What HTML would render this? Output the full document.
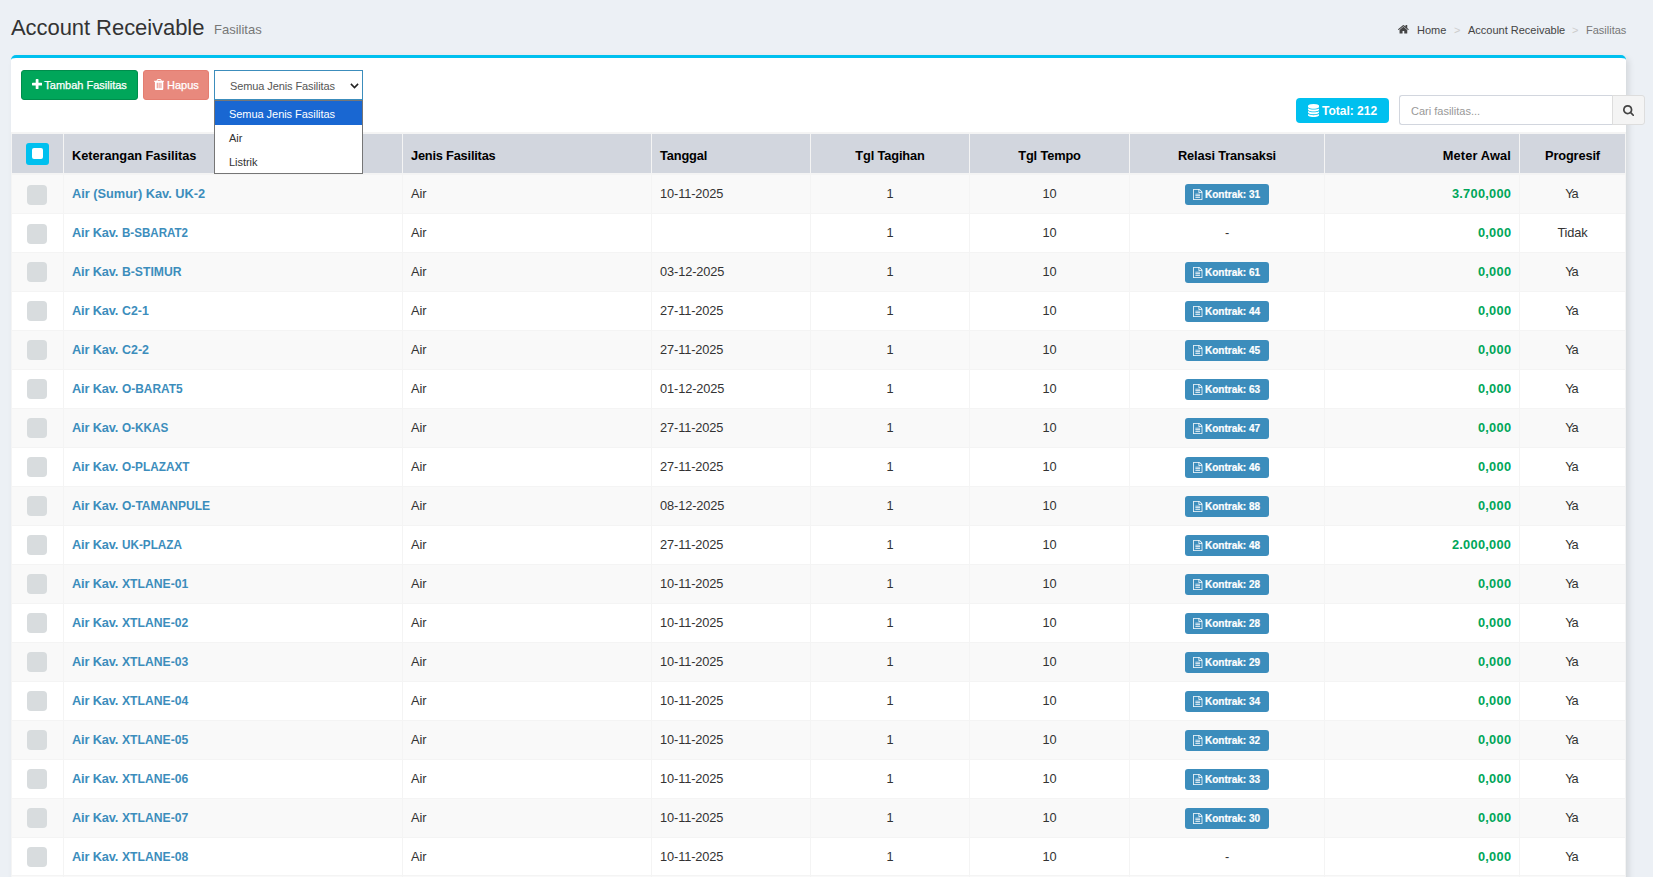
<!DOCTYPE html>
<html lang="id">
<head>
<meta charset="utf-8">
<title>Account Receivable - Fasilitas</title>
<style>
*{box-sizing:border-box}
html,body{margin:0;padding:0}
body{width:1653px;height:877px;overflow:hidden;background:#ecf0f5;font-family:"Liberation Sans",sans-serif;color:#333;position:relative;font-size:12.8px}
.abs{position:absolute;white-space:nowrap}
h1.title{position:absolute;left:11px;top:13px;letter-spacing:-0.06px;margin:0;font-weight:normal;font-size:22px;line-height:30px;color:#333;white-space:nowrap}
h1.title small{position:absolute;left:203px;top:2px;letter-spacing:0;font-size:13px;color:#777;font-weight:normal}
.bc{position:absolute;top:22px;font-size:11px;line-height:16px;color:#444;white-space:nowrap}
.bc.sep{color:#ccc}
.bc.act{color:#777}
.box{position:absolute;left:11px;top:55px;width:1615px;height:900px;background:#fff;border-top:3px solid #00c0ef;border-radius:5px;box-shadow:3px 3px 6px rgba(0,0,0,.1)}
.btn{position:absolute;top:70px;height:30px;border-radius:3px;border:1px solid;color:#fff;font-size:11px;line-height:28px;white-space:nowrap}
.btn-add{left:21px;width:117px;background:#00a65a;border-color:#008d4c}
.btn-del{left:143px;width:66px;background:#dd4b39;border-color:#d73925;opacity:.65}
.btn svg{position:absolute}
.btn span{position:absolute;top:0;-webkit-text-stroke:0.25px #fff}
.sel{position:absolute;left:214px;top:70px;width:149px;height:30px;border:1px solid #3c8dbc;background:#fff;color:#555;font-size:11px;line-height:28px}
.sel span{position:absolute;left:15px;top:1px;letter-spacing:-0.1px}
.sel svg{position:absolute;left:135px;top:12px}
.dd{position:absolute;left:214px;top:100px;width:149px;height:74px;border:1px solid #767676;background:#fff;font-size:11px;color:#333;z-index:5}
.dd div{height:24px;line-height:26px;letter-spacing:-0.05px;padding-left:14px;white-space:nowrap}
.dd div.on{background:#1967d2;color:#fff}
.badge{position:absolute;left:1296px;top:98px;width:93px;height:25px;border-radius:4px;background:#00c0ef;color:#fff;font-weight:bold;font-size:12px;line-height:25px;white-space:nowrap}
.badge svg{position:absolute}
.badge span{position:absolute;left:26px;top:1px}
.srch{position:absolute;left:1399px;top:95px;width:214px;height:30px;border:1px solid #d2d6de;border-right:0;border-radius:3px 0 0 3px;background:#fff;color:#999;font-size:11px;line-height:30px;padding-left:11px;white-space:nowrap}
.sbtn{position:absolute;left:1612px;top:95px;width:33px;height:30px;border:1px solid #ddd;border-radius:0 3px 3px 0;background:#f4f4f4}
.sbtn svg{position:absolute}
table.tbl{position:absolute;left:11px;top:132px;width:1615px;border-collapse:separate;border-spacing:0;table-layout:fixed;border-top:2px solid #f4f4f4;border-right:1px solid #f4f4f4;font-size:12.8px}
.tbl th,.tbl td{border-left:1px solid #f4f4f4;padding:0 8px;white-space:nowrap;overflow:hidden;text-align:left;vertical-align:top}
.tbl th{height:41px;padding-top:4px;line-height:35px;border-bottom:2px solid #f4f4f4;letter-spacing:-0.14px;background:#d2d6de;color:#000;font-weight:bold;font-size:12.8px}
.tbl td{height:39px;padding-top:1px;line-height:36px;letter-spacing:-0.12px;border-bottom:1px solid #f4f4f4;color:#333}
.tbl tr.odd td{background:#f9f9f9}
.tbl tr.even td{background:#fff}
.c1{width:52px}.c2{width:339px}.c3{width:249px}.c4{width:159px}.c5{width:159px}.c6{width:160px}.c7{width:195px}.c8{width:195px}.c9{width:106px}
.tbl .c1{padding:0;position:relative}
.tbl .c5,.tbl .c6,.tbl .c7,.tbl .c9{text-align:center}
.tbl .c8{text-align:right}
.tbl td.c2 a{color:#3c8dbc;font-weight:bold;text-decoration:none}
.tbl td.c8 b{color:#00a65a;letter-spacing:0.27px;margin-right:-0.27px}
.hchk{position:absolute;left:14px;top:9px;width:23px;height:22px;border-radius:3px;background:#00c0ef}
.hchk i{position:absolute;left:6px;top:5px;width:11px;height:11px;border-radius:2px;background:#fff}
.chk{position:absolute;left:15px;top:9px;width:20px;height:20px;border-radius:4px;background:#d8dcde}
.lbl{display:inline-block;position:relative;width:84px;height:21px;border-radius:3px;background:#3c8dbc;color:#fff;font-size:10px;line-height:21px;vertical-align:top;margin-top:8px;text-align:left;letter-spacing:0}
.lbl svg{position:absolute}
.lbl b{position:absolute;left:20px;top:0;-webkit-text-stroke:0.2px #fff}
.tbl td.c2 a span{display:inline-block;letter-spacing:0}
.tbl td.c2 a span.p{width:49.6px;letter-spacing:-0.16px;white-space:pre}
.tbl td.c2 a span.s{transform-origin:0 50%}
.tbl td.ya{letter-spacing:-1.3px;padding-right:10.5px}
.chk.lo{top:10px}
.tbl tbody tr:nth-child(18) td{height:38px}

</style>
</head>
<body>
<h1 class="title">Account Receivable<small>Fasilitas</small></h1>
<svg class="abs" style="left:1398.4px;top:25.15px" width="10.8" height="8.59" viewBox="89.9 253 1612.2 1283"><path fill="#444" d="M1472 992v480q0 26-19 45t-45 19h-384v-384h-256v384h-384q-26 0-45-19t-19-45v-480q0-1 .5-3t.5-3l575-474 575 474q1 2 1 6zm223-69l-62 74q-8 9-21 11h-3q-13 0-21-7l-692-577-692 577q-12 8-24 7-13-2-21-11l-62-74q-8-10-7-23.500t11-21.500l719-599q32-26 76-26t76 26l244 204v-195q0-14 9-23t23-9h192q14 0 23 9t9 23v408l219 182q10 8 11 21.500t-7 23.500z"/></svg>
<span class="bc" style="left:1417px">Home</span>
<span class="bc sep" style="left:1454px">&gt;</span>
<span class="bc" style="left:1468px">Account Receivable</span>
<span class="bc sep" style="left:1572px">&gt;</span>
<span class="bc act" style="left:1586px">Fasilitas</span>
<div class="box"></div>
<div class="btn btn-add"><svg style="left:9.6px;top:8.05px" width="10.21" height="10.21" viewBox="192 128 1408 1408"><path fill="#fff" d="M1600 736v192q0 40-28 68t-68 28h-416v416q0 40-28 68t-68 28h-192q-40 0-68-28t-28-68v-416h-416q-40 0-68-28t-28-68v-192q0-40 28-68t68-28h416v-416q0-40 28-68t68-28h192q40 0 68 28t28 68v416h416q40 0 68 28t28 68z"/></svg><span style="left:22.3px">Tambah Fasilitas</span></div>
<div class="btn btn-del"><svg style="left:9.8px;top:7.8px" width="10.21" height="11.14" viewBox="192 128 1408 1536"><path fill="#fff" d="M704 1376v-704q0-14-9-23t-23-9h-64q-14 0-23 9t-9 23v704q0 14 9 23t23 9h64q14 0 23-9t9-23zm256 0v-704q0-14-9-23t-23-9h-64q-14 0-23 9t-9 23v704q0 14 9 23t23 9h64q14 0 23-9t9-23zm256 0v-704q0-14-9-23t-23-9h-64q-14 0-23 9t-9 23v704q0 14 9 23t23 9h64q14 0 23-9t9-23zm-544-992h448l-48-117q-7-9-17-11h-317q-10 2-17 11zm928 32v64q0 14-9 23t-23 9h-96v948q0 83-47 143.500t-113 60.500h-832q-66 0-113-58.500t-47-141.500v-952h-96q-14 0-23-9t-9-23v-64q0-14 9-23t23-9h309l70-167q15-37 54-63t79-26h320q40 0 79 26t54 63l70 167h309q14 0 23 9t9 23z"/></svg><span style="left:23px">Hapus</span></div>
<div class="sel"><span>Semua Jenis Fasilitas</span><svg width="9" height="6.5" viewBox="0 0 10 7" preserveAspectRatio="none"><path d="M1 1L5 5L9 1" fill="none" stroke="#222" stroke-width="1.7"/></svg></div>
<div class="badge"><svg style="left:12.3px;top:5.6px" width="11.14" height="13.0" viewBox="128 0 1536 1792"><path fill="#fff" d="M896 768q237 0 443-43t325-127v170q0 69-103 128t-280 93.500-385 34.500-385-34.500-280-93.500-103-128v-170q119 84 325 127t443 43zm0 768q237 0 443-43t325-127v170q0 69-103 128t-280 93.500-385 34.500-385-34.500-280-93.500-103-128v-170q119 84 325 127t443 43zm0-384q237 0 443-43t325-127v170q0 69-103 128t-280 93.500-385 34.500-385-34.500-280-93.500-103-128v-170q119 84 325 127t443 43zm0-1152q208 0 385 34.500t280 93.500 103 128v128q0 69-103 128t-280 93.500-385 34.500-385-34.500-280-93.500-103-128v-128q0-69 103-128t280-93.500 385-34.500z"/></svg><span>Total: 212</span></div>
<div class="srch">Cari fasilitas...</div>
<div class="sbtn"><svg style="left:9.9px;top:8.7px" width="11.14" height="11.14" viewBox="64 128 1664 1664"><path fill="#444" d="M1216 832q0-185-131.500-316.500t-316.500-131.500-316.500 131.500-131.500 316.500 131.500 316.500 316.500 131.500 316.500-131.500 131.500-316.500zm512 832q0 52-38 90t-90 38q-54 0-90-38l-343-342q-179 124-399 124-143 0-273.500-55.500t-225-150-150-225-55.500-273.500 55.500-273.500 150-225 225-150 273.500-55.500 273.500 55.500 225 150 150 225 55.500 273.500q0 220-124 399l343 343q37 37 37 90z"/></svg></div>
<table class="tbl">
<thead>
<tr>
<th class="c1"><span class="hchk"><i></i></span></th>
<th class="c2" style="letter-spacing:-0.04px">Keterangan Fasilitas</th>
<th class="c3" style="letter-spacing:-0.2px">Jenis Fasilitas</th>
<th class="c4">Tanggal</th>
<th class="c5">Tgl Tagihan</th>
<th class="c6">Tgl Tempo</th>
<th class="c7">Relasi Transaksi</th>
<th class="c8" style="letter-spacing:0.14px">Meter Awal</th>
<th class="c9">Progresif</th>
</tr>
</thead>
<tbody>
<tr class="odd">
<td class="c1"><span class="chk lo"></span></td>
<td class="c2"><a><span style="letter-spacing:-0.02px">Air (Sumur) Kav. UK-2</span></a></td>
<td class="c3">Air</td>
<td class="c4">10-11-2025</td>
<td class="c5">1</td>
<td class="c6">10</td>
<td class="c7"><span class="lbl"><svg style="left:8.1px;top:4.6px" width="9.43" height="11.0" viewBox="128 0 1536 1792"><path fill="#fff" d="M1596 380q28 28 48 76t20 88v1152q0 40-28 68t-68 28h-1344q-40 0-68-28t-28-68v-1600q0-40 28-68t68-28h896q40 0 88 20t76 48zm-444-244v376h376q-10-29-22-41l-313-313q-12-12-41-22zm384 1528v-1024h-416q-40 0-68-28t-28-68v-416h-768v1536h1280zm-1024-864q0-14 9-23t23-9h704q14 0 23 9t9 23v64q0 14-9 23t-23 9h-704q-14 0-23-9t-9-23v-64zm736 224q14 0 23 9t9 23v64q0 14-9 23t-23 9h-704q-14 0-23-9t-9-23v-64q0-14 9-23t23-9h704zm0 256q14 0 23 9t9 23v64q0 14-9 23t-23 9h-704q-14 0-23-9t-9-23v-64q0-14 9-23t23-9h704z"/></svg><b>Kontrak: 31</b></span></td>
<td class="c8"><b>3.700,000</b></td>
<td class="c9 ya">Ya</td>
</tr>
<tr class="even">
<td class="c1"><span class="chk lo"></span></td>
<td class="c2"><a><span class="p">Air Kav. </span><span class="s" style="transform:scaleX(0.904)">B-SBARAT2</span></a></td>
<td class="c3">Air</td>
<td class="c4"></td>
<td class="c5">1</td>
<td class="c6">10</td>
<td class="c7"><span class="dash">-</span></td>
<td class="c8"><b>0,000</b></td>
<td class="c9">Tidak</td>
</tr>
<tr class="odd">
<td class="c1"><span class="chk"></span></td>
<td class="c2"><a><span class="p">Air Kav. </span><span class="s" style="transform:scaleX(0.953)">B-STIMUR</span></a></td>
<td class="c3">Air</td>
<td class="c4">03-12-2025</td>
<td class="c5">1</td>
<td class="c6">10</td>
<td class="c7"><span class="lbl"><svg style="left:8.1px;top:4.6px" width="9.43" height="11.0" viewBox="128 0 1536 1792"><path fill="#fff" d="M1596 380q28 28 48 76t20 88v1152q0 40-28 68t-68 28h-1344q-40 0-68-28t-28-68v-1600q0-40 28-68t68-28h896q40 0 88 20t76 48zm-444-244v376h376q-10-29-22-41l-313-313q-12-12-41-22zm384 1528v-1024h-416q-40 0-68-28t-28-68v-416h-768v1536h1280zm-1024-864q0-14 9-23t23-9h704q14 0 23 9t9 23v64q0 14-9 23t-23 9h-704q-14 0-23-9t-9-23v-64zm736 224q14 0 23 9t9 23v64q0 14-9 23t-23 9h-704q-14 0-23-9t-9-23v-64q0-14 9-23t23-9h704zm0 256q14 0 23 9t9 23v64q0 14-9 23t-23 9h-704q-14 0-23-9t-9-23v-64q0-14 9-23t23-9h704z"/></svg><b>Kontrak: 61</b></span></td>
<td class="c8"><b>0,000</b></td>
<td class="c9 ya">Ya</td>
</tr>
<tr class="even">
<td class="c1"><span class="chk"></span></td>
<td class="c2"><a><span class="p">Air Kav. </span><span class="s" style="transform:scaleX(0.964)">C2-1</span></a></td>
<td class="c3">Air</td>
<td class="c4">27-11-2025</td>
<td class="c5">1</td>
<td class="c6">10</td>
<td class="c7"><span class="lbl"><svg style="left:8.1px;top:4.6px" width="9.43" height="11.0" viewBox="128 0 1536 1792"><path fill="#fff" d="M1596 380q28 28 48 76t20 88v1152q0 40-28 68t-68 28h-1344q-40 0-68-28t-28-68v-1600q0-40 28-68t68-28h896q40 0 88 20t76 48zm-444-244v376h376q-10-29-22-41l-313-313q-12-12-41-22zm384 1528v-1024h-416q-40 0-68-28t-28-68v-416h-768v1536h1280zm-1024-864q0-14 9-23t23-9h704q14 0 23 9t9 23v64q0 14-9 23t-23 9h-704q-14 0-23-9t-9-23v-64zm736 224q14 0 23 9t9 23v64q0 14-9 23t-23 9h-704q-14 0-23-9t-9-23v-64q0-14 9-23t23-9h704zm0 256q14 0 23 9t9 23v64q0 14-9 23t-23 9h-704q-14 0-23-9t-9-23v-64q0-14 9-23t23-9h704z"/></svg><b>Kontrak: 44</b></span></td>
<td class="c8"><b>0,000</b></td>
<td class="c9 ya">Ya</td>
</tr>
<tr class="odd">
<td class="c1"><span class="chk"></span></td>
<td class="c2"><a><span class="p">Air Kav. </span><span class="s" style="transform:scaleX(0.971)">C2-2</span></a></td>
<td class="c3">Air</td>
<td class="c4">27-11-2025</td>
<td class="c5">1</td>
<td class="c6">10</td>
<td class="c7"><span class="lbl"><svg style="left:8.1px;top:4.6px" width="9.43" height="11.0" viewBox="128 0 1536 1792"><path fill="#fff" d="M1596 380q28 28 48 76t20 88v1152q0 40-28 68t-68 28h-1344q-40 0-68-28t-28-68v-1600q0-40 28-68t68-28h896q40 0 88 20t76 48zm-444-244v376h376q-10-29-22-41l-313-313q-12-12-41-22zm384 1528v-1024h-416q-40 0-68-28t-28-68v-416h-768v1536h1280zm-1024-864q0-14 9-23t23-9h704q14 0 23 9t9 23v64q0 14-9 23t-23 9h-704q-14 0-23-9t-9-23v-64zm736 224q14 0 23 9t9 23v64q0 14-9 23t-23 9h-704q-14 0-23-9t-9-23v-64q0-14 9-23t23-9h704zm0 256q14 0 23 9t9 23v64q0 14-9 23t-23 9h-704q-14 0-23-9t-9-23v-64q0-14 9-23t23-9h704z"/></svg><b>Kontrak: 45</b></span></td>
<td class="c8"><b>0,000</b></td>
<td class="c9 ya">Ya</td>
</tr>
<tr class="even">
<td class="c1"><span class="chk"></span></td>
<td class="c2"><a><span class="p">Air Kav. </span><span class="s" style="transform:scaleX(0.932)">O-BARAT5</span></a></td>
<td class="c3">Air</td>
<td class="c4">01-12-2025</td>
<td class="c5">1</td>
<td class="c6">10</td>
<td class="c7"><span class="lbl"><svg style="left:8.1px;top:4.6px" width="9.43" height="11.0" viewBox="128 0 1536 1792"><path fill="#fff" d="M1596 380q28 28 48 76t20 88v1152q0 40-28 68t-68 28h-1344q-40 0-68-28t-28-68v-1600q0-40 28-68t68-28h896q40 0 88 20t76 48zm-444-244v376h376q-10-29-22-41l-313-313q-12-12-41-22zm384 1528v-1024h-416q-40 0-68-28t-28-68v-416h-768v1536h1280zm-1024-864q0-14 9-23t23-9h704q14 0 23 9t9 23v64q0 14-9 23t-23 9h-704q-14 0-23-9t-9-23v-64zm736 224q14 0 23 9t9 23v64q0 14-9 23t-23 9h-704q-14 0-23-9t-9-23v-64q0-14 9-23t23-9h704zm0 256q14 0 23 9t9 23v64q0 14-9 23t-23 9h-704q-14 0-23-9t-9-23v-64q0-14 9-23t23-9h704z"/></svg><b>Kontrak: 63</b></span></td>
<td class="c8"><b>0,000</b></td>
<td class="c9 ya">Ya</td>
</tr>
<tr class="odd">
<td class="c1"><span class="chk"></span></td>
<td class="c2"><a><span class="p">Air Kav. </span><span class="s" style="transform:scaleX(0.916)">O-KKAS</span></a></td>
<td class="c3">Air</td>
<td class="c4">27-11-2025</td>
<td class="c5">1</td>
<td class="c6">10</td>
<td class="c7"><span class="lbl"><svg style="left:8.1px;top:4.6px" width="9.43" height="11.0" viewBox="128 0 1536 1792"><path fill="#fff" d="M1596 380q28 28 48 76t20 88v1152q0 40-28 68t-68 28h-1344q-40 0-68-28t-28-68v-1600q0-40 28-68t68-28h896q40 0 88 20t76 48zm-444-244v376h376q-10-29-22-41l-313-313q-12-12-41-22zm384 1528v-1024h-416q-40 0-68-28t-28-68v-416h-768v1536h1280zm-1024-864q0-14 9-23t23-9h704q14 0 23 9t9 23v64q0 14-9 23t-23 9h-704q-14 0-23-9t-9-23v-64zm736 224q14 0 23 9t9 23v64q0 14-9 23t-23 9h-704q-14 0-23-9t-9-23v-64q0-14 9-23t23-9h704zm0 256q14 0 23 9t9 23v64q0 14-9 23t-23 9h-704q-14 0-23-9t-9-23v-64q0-14 9-23t23-9h704z"/></svg><b>Kontrak: 47</b></span></td>
<td class="c8"><b>0,000</b></td>
<td class="c9 ya">Ya</td>
</tr>
<tr class="even">
<td class="c1"><span class="chk"></span></td>
<td class="c2"><a><span class="p">Air Kav. </span><span class="s" style="transform:scaleX(0.922)">O-PLAZAXT</span></a></td>
<td class="c3">Air</td>
<td class="c4">27-11-2025</td>
<td class="c5">1</td>
<td class="c6">10</td>
<td class="c7"><span class="lbl"><svg style="left:8.1px;top:4.6px" width="9.43" height="11.0" viewBox="128 0 1536 1792"><path fill="#fff" d="M1596 380q28 28 48 76t20 88v1152q0 40-28 68t-68 28h-1344q-40 0-68-28t-28-68v-1600q0-40 28-68t68-28h896q40 0 88 20t76 48zm-444-244v376h376q-10-29-22-41l-313-313q-12-12-41-22zm384 1528v-1024h-416q-40 0-68-28t-28-68v-416h-768v1536h1280zm-1024-864q0-14 9-23t23-9h704q14 0 23 9t9 23v64q0 14-9 23t-23 9h-704q-14 0-23-9t-9-23v-64zm736 224q14 0 23 9t9 23v64q0 14-9 23t-23 9h-704q-14 0-23-9t-9-23v-64q0-14 9-23t23-9h704zm0 256q14 0 23 9t9 23v64q0 14-9 23t-23 9h-704q-14 0-23-9t-9-23v-64q0-14 9-23t23-9h704z"/></svg><b>Kontrak: 46</b></span></td>
<td class="c8"><b>0,000</b></td>
<td class="c9 ya">Ya</td>
</tr>
<tr class="odd">
<td class="c1"><span class="chk"></span></td>
<td class="c2"><a><span class="p">Air Kav. </span><span class="s" style="transform:scaleX(0.941)">O-TAMANPULE</span></a></td>
<td class="c3">Air</td>
<td class="c4">08-12-2025</td>
<td class="c5">1</td>
<td class="c6">10</td>
<td class="c7"><span class="lbl"><svg style="left:8.1px;top:4.6px" width="9.43" height="11.0" viewBox="128 0 1536 1792"><path fill="#fff" d="M1596 380q28 28 48 76t20 88v1152q0 40-28 68t-68 28h-1344q-40 0-68-28t-28-68v-1600q0-40 28-68t68-28h896q40 0 88 20t76 48zm-444-244v376h376q-10-29-22-41l-313-313q-12-12-41-22zm384 1528v-1024h-416q-40 0-68-28t-28-68v-416h-768v1536h1280zm-1024-864q0-14 9-23t23-9h704q14 0 23 9t9 23v64q0 14-9 23t-23 9h-704q-14 0-23-9t-9-23v-64zm736 224q14 0 23 9t9 23v64q0 14-9 23t-23 9h-704q-14 0-23-9t-9-23v-64q0-14 9-23t23-9h704zm0 256q14 0 23 9t9 23v64q0 14-9 23t-23 9h-704q-14 0-23-9t-9-23v-64q0-14 9-23t23-9h704z"/></svg><b>Kontrak: 88</b></span></td>
<td class="c8"><b>0,000</b></td>
<td class="c9 ya">Ya</td>
</tr>
<tr class="even">
<td class="c1"><span class="chk"></span></td>
<td class="c2"><a><span class="p">Air Kav. </span><span class="s" style="transform:scaleX(0.917)">UK-PLAZA</span></a></td>
<td class="c3">Air</td>
<td class="c4">27-11-2025</td>
<td class="c5">1</td>
<td class="c6">10</td>
<td class="c7"><span class="lbl"><svg style="left:8.1px;top:4.6px" width="9.43" height="11.0" viewBox="128 0 1536 1792"><path fill="#fff" d="M1596 380q28 28 48 76t20 88v1152q0 40-28 68t-68 28h-1344q-40 0-68-28t-28-68v-1600q0-40 28-68t68-28h896q40 0 88 20t76 48zm-444-244v376h376q-10-29-22-41l-313-313q-12-12-41-22zm384 1528v-1024h-416q-40 0-68-28t-28-68v-416h-768v1536h1280zm-1024-864q0-14 9-23t23-9h704q14 0 23 9t9 23v64q0 14-9 23t-23 9h-704q-14 0-23-9t-9-23v-64zm736 224q14 0 23 9t9 23v64q0 14-9 23t-23 9h-704q-14 0-23-9t-9-23v-64q0-14 9-23t23-9h704zm0 256q14 0 23 9t9 23v64q0 14-9 23t-23 9h-704q-14 0-23-9t-9-23v-64q0-14 9-23t23-9h704z"/></svg><b>Kontrak: 48</b></span></td>
<td class="c8"><b>2.000,000</b></td>
<td class="c9 ya">Ya</td>
</tr>
<tr class="odd">
<td class="c1"><span class="chk"></span></td>
<td class="c2"><a><span class="p">Air Kav. </span><span class="s" style="transform:scaleX(0.95)">XTLANE-01</span></a></td>
<td class="c3">Air</td>
<td class="c4">10-11-2025</td>
<td class="c5">1</td>
<td class="c6">10</td>
<td class="c7"><span class="lbl"><svg style="left:8.1px;top:4.6px" width="9.43" height="11.0" viewBox="128 0 1536 1792"><path fill="#fff" d="M1596 380q28 28 48 76t20 88v1152q0 40-28 68t-68 28h-1344q-40 0-68-28t-28-68v-1600q0-40 28-68t68-28h896q40 0 88 20t76 48zm-444-244v376h376q-10-29-22-41l-313-313q-12-12-41-22zm384 1528v-1024h-416q-40 0-68-28t-28-68v-416h-768v1536h1280zm-1024-864q0-14 9-23t23-9h704q14 0 23 9t9 23v64q0 14-9 23t-23 9h-704q-14 0-23-9t-9-23v-64zm736 224q14 0 23 9t9 23v64q0 14-9 23t-23 9h-704q-14 0-23-9t-9-23v-64q0-14 9-23t23-9h704zm0 256q14 0 23 9t9 23v64q0 14-9 23t-23 9h-704q-14 0-23-9t-9-23v-64q0-14 9-23t23-9h704z"/></svg><b>Kontrak: 28</b></span></td>
<td class="c8"><b>0,000</b></td>
<td class="c9 ya">Ya</td>
</tr>
<tr class="even">
<td class="c1"><span class="chk"></span></td>
<td class="c2"><a><span class="p">Air Kav. </span><span class="s" style="transform:scaleX(0.95)">XTLANE-02</span></a></td>
<td class="c3">Air</td>
<td class="c4">10-11-2025</td>
<td class="c5">1</td>
<td class="c6">10</td>
<td class="c7"><span class="lbl"><svg style="left:8.1px;top:4.6px" width="9.43" height="11.0" viewBox="128 0 1536 1792"><path fill="#fff" d="M1596 380q28 28 48 76t20 88v1152q0 40-28 68t-68 28h-1344q-40 0-68-28t-28-68v-1600q0-40 28-68t68-28h896q40 0 88 20t76 48zm-444-244v376h376q-10-29-22-41l-313-313q-12-12-41-22zm384 1528v-1024h-416q-40 0-68-28t-28-68v-416h-768v1536h1280zm-1024-864q0-14 9-23t23-9h704q14 0 23 9t9 23v64q0 14-9 23t-23 9h-704q-14 0-23-9t-9-23v-64zm736 224q14 0 23 9t9 23v64q0 14-9 23t-23 9h-704q-14 0-23-9t-9-23v-64q0-14 9-23t23-9h704zm0 256q14 0 23 9t9 23v64q0 14-9 23t-23 9h-704q-14 0-23-9t-9-23v-64q0-14 9-23t23-9h704z"/></svg><b>Kontrak: 28</b></span></td>
<td class="c8"><b>0,000</b></td>
<td class="c9 ya">Ya</td>
</tr>
<tr class="odd">
<td class="c1"><span class="chk"></span></td>
<td class="c2"><a><span class="p">Air Kav. </span><span class="s" style="transform:scaleX(0.95)">XTLANE-03</span></a></td>
<td class="c3">Air</td>
<td class="c4">10-11-2025</td>
<td class="c5">1</td>
<td class="c6">10</td>
<td class="c7"><span class="lbl"><svg style="left:8.1px;top:4.6px" width="9.43" height="11.0" viewBox="128 0 1536 1792"><path fill="#fff" d="M1596 380q28 28 48 76t20 88v1152q0 40-28 68t-68 28h-1344q-40 0-68-28t-28-68v-1600q0-40 28-68t68-28h896q40 0 88 20t76 48zm-444-244v376h376q-10-29-22-41l-313-313q-12-12-41-22zm384 1528v-1024h-416q-40 0-68-28t-28-68v-416h-768v1536h1280zm-1024-864q0-14 9-23t23-9h704q14 0 23 9t9 23v64q0 14-9 23t-23 9h-704q-14 0-23-9t-9-23v-64zm736 224q14 0 23 9t9 23v64q0 14-9 23t-23 9h-704q-14 0-23-9t-9-23v-64q0-14 9-23t23-9h704zm0 256q14 0 23 9t9 23v64q0 14-9 23t-23 9h-704q-14 0-23-9t-9-23v-64q0-14 9-23t23-9h704z"/></svg><b>Kontrak: 29</b></span></td>
<td class="c8"><b>0,000</b></td>
<td class="c9 ya">Ya</td>
</tr>
<tr class="even">
<td class="c1"><span class="chk"></span></td>
<td class="c2"><a><span class="p">Air Kav. </span><span class="s" style="transform:scaleX(0.95)">XTLANE-04</span></a></td>
<td class="c3">Air</td>
<td class="c4">10-11-2025</td>
<td class="c5">1</td>
<td class="c6">10</td>
<td class="c7"><span class="lbl"><svg style="left:8.1px;top:4.6px" width="9.43" height="11.0" viewBox="128 0 1536 1792"><path fill="#fff" d="M1596 380q28 28 48 76t20 88v1152q0 40-28 68t-68 28h-1344q-40 0-68-28t-28-68v-1600q0-40 28-68t68-28h896q40 0 88 20t76 48zm-444-244v376h376q-10-29-22-41l-313-313q-12-12-41-22zm384 1528v-1024h-416q-40 0-68-28t-28-68v-416h-768v1536h1280zm-1024-864q0-14 9-23t23-9h704q14 0 23 9t9 23v64q0 14-9 23t-23 9h-704q-14 0-23-9t-9-23v-64zm736 224q14 0 23 9t9 23v64q0 14-9 23t-23 9h-704q-14 0-23-9t-9-23v-64q0-14 9-23t23-9h704zm0 256q14 0 23 9t9 23v64q0 14-9 23t-23 9h-704q-14 0-23-9t-9-23v-64q0-14 9-23t23-9h704z"/></svg><b>Kontrak: 34</b></span></td>
<td class="c8"><b>0,000</b></td>
<td class="c9 ya">Ya</td>
</tr>
<tr class="odd">
<td class="c1"><span class="chk"></span></td>
<td class="c2"><a><span class="p">Air Kav. </span><span class="s" style="transform:scaleX(0.95)">XTLANE-05</span></a></td>
<td class="c3">Air</td>
<td class="c4">10-11-2025</td>
<td class="c5">1</td>
<td class="c6">10</td>
<td class="c7"><span class="lbl"><svg style="left:8.1px;top:4.6px" width="9.43" height="11.0" viewBox="128 0 1536 1792"><path fill="#fff" d="M1596 380q28 28 48 76t20 88v1152q0 40-28 68t-68 28h-1344q-40 0-68-28t-28-68v-1600q0-40 28-68t68-28h896q40 0 88 20t76 48zm-444-244v376h376q-10-29-22-41l-313-313q-12-12-41-22zm384 1528v-1024h-416q-40 0-68-28t-28-68v-416h-768v1536h1280zm-1024-864q0-14 9-23t23-9h704q14 0 23 9t9 23v64q0 14-9 23t-23 9h-704q-14 0-23-9t-9-23v-64zm736 224q14 0 23 9t9 23v64q0 14-9 23t-23 9h-704q-14 0-23-9t-9-23v-64q0-14 9-23t23-9h704zm0 256q14 0 23 9t9 23v64q0 14-9 23t-23 9h-704q-14 0-23-9t-9-23v-64q0-14 9-23t23-9h704z"/></svg><b>Kontrak: 32</b></span></td>
<td class="c8"><b>0,000</b></td>
<td class="c9 ya">Ya</td>
</tr>
<tr class="even">
<td class="c1"><span class="chk"></span></td>
<td class="c2"><a><span class="p">Air Kav. </span><span class="s" style="transform:scaleX(0.95)">XTLANE-06</span></a></td>
<td class="c3">Air</td>
<td class="c4">10-11-2025</td>
<td class="c5">1</td>
<td class="c6">10</td>
<td class="c7"><span class="lbl"><svg style="left:8.1px;top:4.6px" width="9.43" height="11.0" viewBox="128 0 1536 1792"><path fill="#fff" d="M1596 380q28 28 48 76t20 88v1152q0 40-28 68t-68 28h-1344q-40 0-68-28t-28-68v-1600q0-40 28-68t68-28h896q40 0 88 20t76 48zm-444-244v376h376q-10-29-22-41l-313-313q-12-12-41-22zm384 1528v-1024h-416q-40 0-68-28t-28-68v-416h-768v1536h1280zm-1024-864q0-14 9-23t23-9h704q14 0 23 9t9 23v64q0 14-9 23t-23 9h-704q-14 0-23-9t-9-23v-64zm736 224q14 0 23 9t9 23v64q0 14-9 23t-23 9h-704q-14 0-23-9t-9-23v-64q0-14 9-23t23-9h704zm0 256q14 0 23 9t9 23v64q0 14-9 23t-23 9h-704q-14 0-23-9t-9-23v-64q0-14 9-23t23-9h704z"/></svg><b>Kontrak: 33</b></span></td>
<td class="c8"><b>0,000</b></td>
<td class="c9 ya">Ya</td>
</tr>
<tr class="odd">
<td class="c1"><span class="chk"></span></td>
<td class="c2"><a><span class="p">Air Kav. </span><span class="s" style="transform:scaleX(0.95)">XTLANE-07</span></a></td>
<td class="c3">Air</td>
<td class="c4">10-11-2025</td>
<td class="c5">1</td>
<td class="c6">10</td>
<td class="c7"><span class="lbl"><svg style="left:8.1px;top:4.6px" width="9.43" height="11.0" viewBox="128 0 1536 1792"><path fill="#fff" d="M1596 380q28 28 48 76t20 88v1152q0 40-28 68t-68 28h-1344q-40 0-68-28t-28-68v-1600q0-40 28-68t68-28h896q40 0 88 20t76 48zm-444-244v376h376q-10-29-22-41l-313-313q-12-12-41-22zm384 1528v-1024h-416q-40 0-68-28t-28-68v-416h-768v1536h1280zm-1024-864q0-14 9-23t23-9h704q14 0 23 9t9 23v64q0 14-9 23t-23 9h-704q-14 0-23-9t-9-23v-64zm736 224q14 0 23 9t9 23v64q0 14-9 23t-23 9h-704q-14 0-23-9t-9-23v-64q0-14 9-23t23-9h704zm0 256q14 0 23 9t9 23v64q0 14-9 23t-23 9h-704q-14 0-23-9t-9-23v-64q0-14 9-23t23-9h704z"/></svg><b>Kontrak: 30</b></span></td>
<td class="c8"><b>0,000</b></td>
<td class="c9 ya">Ya</td>
</tr>
<tr class="even">
<td class="c1"><span class="chk"></span></td>
<td class="c2"><a><span class="p">Air Kav. </span><span class="s" style="transform:scaleX(0.95)">XTLANE-08</span></a></td>
<td class="c3">Air</td>
<td class="c4">10-11-2025</td>
<td class="c5">1</td>
<td class="c6">10</td>
<td class="c7"><span class="dash">-</span></td>
<td class="c8"><b>0,000</b></td>
<td class="c9 ya">Ya</td>
</tr>
<tr class="odd">
<td class="c1"><span class="chk"></span></td>
<td class="c2"><a><span class="p">Air Kav. </span><span class="s" style="transform:scaleX(0.95)">XTLANE-09</span></a></td>
<td class="c3">Air</td>
<td class="c4">10-11-2025</td>
<td class="c5">1</td>
<td class="c6">10</td>
<td class="c7"><span class="dash">-</span></td>
<td class="c8"><b>0,000</b></td>
<td class="c9 ya">Ya</td>
</tr>
</tbody>
</table>
<div class="dd"><div class="on">Semua Jenis Fasilitas</div><div>Air</div><div>Listrik</div></div>
</body>
</html>
